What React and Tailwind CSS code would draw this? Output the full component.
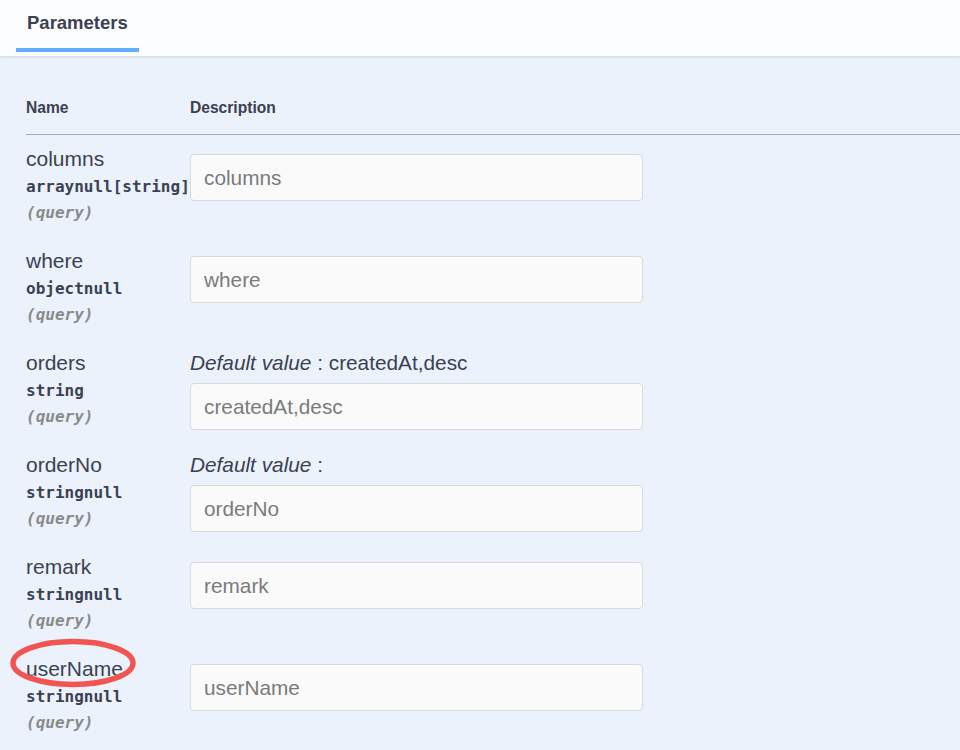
const params = [
  { name: "columns", type: "arraynull[string]", placeholder: "columns" },
  { name: "where", type: "objectnull", placeholder: "where" },
  { name: "orders", type: "string", placeholder: "createdAt,desc", def: "createdAt,desc" },
  { name: "orderNo", type: "stringnull", placeholder: "orderNo", def: "" },
  { name: "remark", type: "stringnull", placeholder: "remark" },
  { name: "userName", type: "stringnull", placeholder: "userName", circled: true },
];

const sans = { fontFamily: '"Liberation Sans", Arial, sans-serif' };

function ParamRow({ p }) {
  return (
    <div className="flex py-[11px]">
      <div className="w-[164px] shrink-0 relative">
        <div className="text-[21px] leading-[26px] text-[#3b4151]">{p.name}</div>
        <div className="mt-[2px] text-[16px] leading-[26px] font-bold text-[#3b4151] whitespace-nowrap font-['DejaVu_Sans_Mono',monospace]">
          {p.type}
        </div>
        <div className="text-[16px] leading-[26px] font-bold italic text-[#8a8a8a] font-['DejaVu_Sans_Mono',monospace]">
          (query)
        </div>
        {p.circled && (
          <svg className="absolute left-[-16px] top-[-19px] pointer-events-none" width="132" height="54" viewBox="0 0 132 54">
            <ellipse cx="63" cy="26" rx="60" ry="21.5" fill="none" stroke="#f25454" strokeWidth="5.5" />
          </svg>
        )}
      </div>
      <div className="flex-1">
        {p.def !== undefined ? (
          <div className="text-[20.8px] leading-[26px] text-[#3b4151] mb-[7px]">
            <i>Default value</i> : {p.def}
          </div>
        ) : (
          <div className="h-[8px]" />
        )}
        <input
          placeholder={p.placeholder}
          className="block w-[453px] h-[47px] rounded-[4px] border border-[#d9d9d9] bg-[#fafafa] px-[13px] text-[20.8px] text-[#3b4151] placeholder:text-[#7a7a7a] outline-none"
          style={sans}
        />
      </div>
    </div>
  );
}

export default function App() {
  return (
    <div className="min-h-screen w-[960px] bg-[#ebf2fc] overflow-hidden" style={sans}>
      <div className="h-[56px] bg-[#fcfdfe] shadow-[0_1px_3px_rgba(0,0,0,0.12)] flex items-start">
        <div className="ml-[16px] px-[11px] pt-[11px] pb-[13px] border-b-4 border-[#61affe] text-[18.5px] leading-[24px] font-bold text-[#3b4151]">
          Parameters
        </div>
      </div>
      <div className="pl-[26px] pt-[39px]">
        <div className="flex pb-[13px] border-b border-[#a8adb6] text-[15.6px] leading-[26px] font-bold text-[#3b4151]">
          <div className="w-[164px]">Name</div>
          <div>Description</div>
        </div>
        {params.map((p) => (
          <ParamRow key={p.name} p={p} />
        ))}
      </div>
    </div>
  );
}
